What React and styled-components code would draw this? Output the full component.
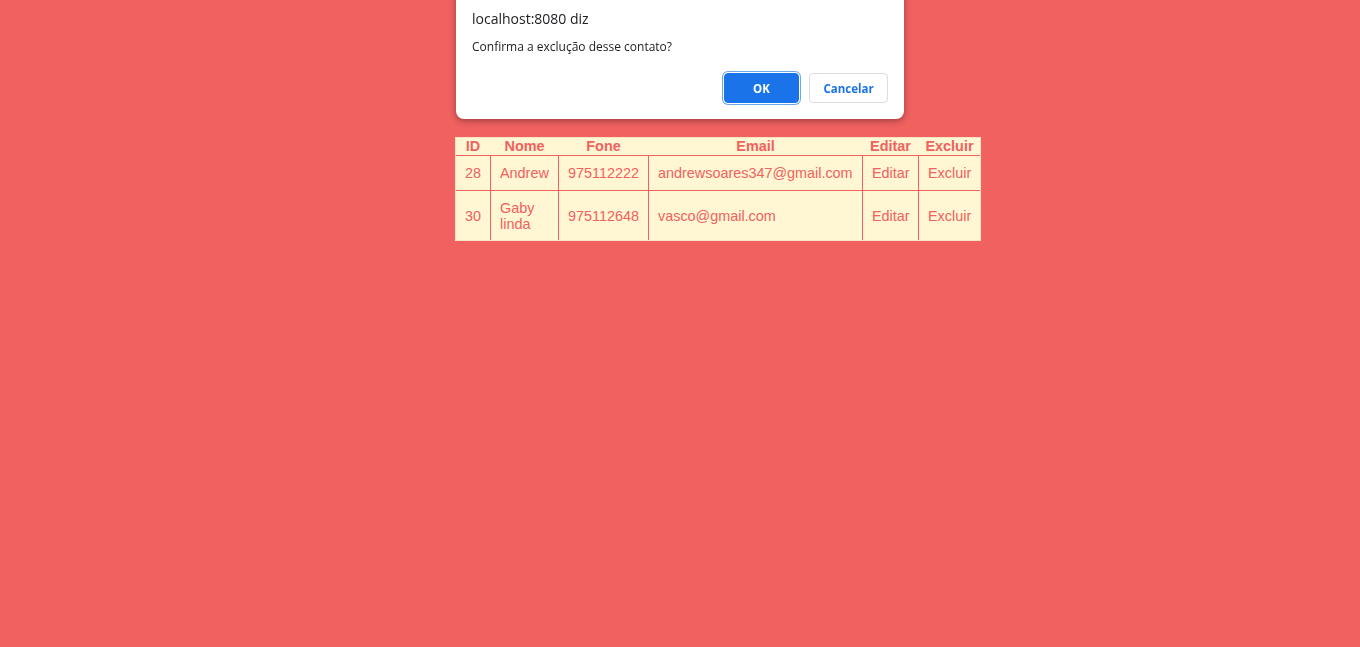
import styled, { createGlobalStyle } from "styled-components";

const contatos = [
  { id: 28, nome: "Andrew", fone: "975112222", email: "andrewsoares347@gmail.com" },
  { id: 30, nome: "Gaby linda", fone: "975112648", email: "vasco@gmail.com" },
];

const GlobalStyle = createGlobalStyle`
  html, body {
    margin: 0;
    padding: 0;
    background: #f06160;
    font-family: "Liberation Sans", Arial, sans-serif;
  }
`;

const Page = styled.div`
  min-height: 647px;
  padding-top: 137px;
  box-sizing: border-box;
`;

const Wrapper = styled.div`
  width: 450px;
  margin: 0 auto;
`;

const Table = styled.table`
  width: 525px;
  border-collapse: collapse;
  table-layout: fixed;
  background: #fff7d3;
  color: #f06160;
  font-size: 14.4px;
  outline: 1px solid #f6e3c4;
  outline-offset: -1px;
`;

const Th = styled.th`
  width: ${(p) => p.$w}px;
  padding: 1px 0;
  line-height: 16px;
  font-weight: bold;
  text-align: center;
  box-sizing: border-box;
`;

const Td = styled.td`
  border: 1px solid #f06160;
  padding: 9px 9px;
  line-height: 16px;
  text-align: left;
  vertical-align: middle;

  tr:last-child > & {
    padding-bottom: 8px;
  }
`;

const Dialog = styled.div`
  position: fixed;
  top: -20px;
  left: 50%;
  transform: translateX(-50%);
  width: 448px;
  box-sizing: border-box;
  padding: 28px 16px 16px;
  background: #fff;
  border-radius: 0 0 8px 8px;
  box-shadow: 0 2px 6px rgba(60, 20, 20, 0.45);
  font-family: "Open Sans", "Noto Sans", sans-serif;
  color: #202124;
`;

const Title = styled.div`
  font-size: 14px;
  line-height: 20px;
  margin-top: 1px;
`;

const Message = styled.div`
  margin-top: 10px;
  font-size: 12px;
  line-height: 16px;
`;

const Actions = styled.div`
  display: flex;
  justify-content: flex-end;
  gap: 10px;
  margin-top: 18px;
`;

const Button = styled.button`
  height: 30px;
  width: ${(p) => (p.$primary ? "75px" : "79px")};
  padding: 0;
  border-radius: 4px;
  font-family: "Open Sans", "Noto Sans", sans-serif;
  font-size: 11.5px;
  font-weight: 700;
  cursor: pointer;
  border: 1px solid ${(p) => (p.$primary ? "#1a73e8" : "#dadce0")};
  background: ${(p) => (p.$primary ? "#1a73e8" : "#fff")};
  color: ${(p) => (p.$primary ? "#fff" : "#1a73e8")};
  box-shadow: ${(p) => (p.$primary ? "0 0 0 1px #fff, 0 0 0 2px #6ea5f0" : "none")};
`;

export default function App() {
  return (
    <>
      <GlobalStyle />
      <Page>
        <Wrapper>
          <Table>
            <thead>
              <tr>
                <Th $w={35}>ID</Th>
                <Th $w={68}>Nome</Th>
                <Th $w={90}>Fone</Th>
                <Th $w={214}>Email</Th>
                <Th $w={56}>Editar</Th>
                <Th $w={62}>Excluir</Th>
              </tr>
            </thead>
            <tbody>
              {contatos.map((c) => (
                <tr key={c.id}>
                  <Td>{c.id}</Td>
                  <Td>{c.nome}</Td>
                  <Td>{c.fone}</Td>
                  <Td>{c.email}</Td>
                  <Td>Editar</Td>
                  <Td>Excluir</Td>
                </tr>
              ))}
            </tbody>
          </Table>
        </Wrapper>
      </Page>
      <Dialog>
        <Title>localhost:8080 diz</Title>
        <Message>Confirma a exclução desse contato?</Message>
        <Actions>
          <Button $primary>OK</Button>
          <Button>Cancelar</Button>
        </Actions>
      </Dialog>
    </>
  );
}
